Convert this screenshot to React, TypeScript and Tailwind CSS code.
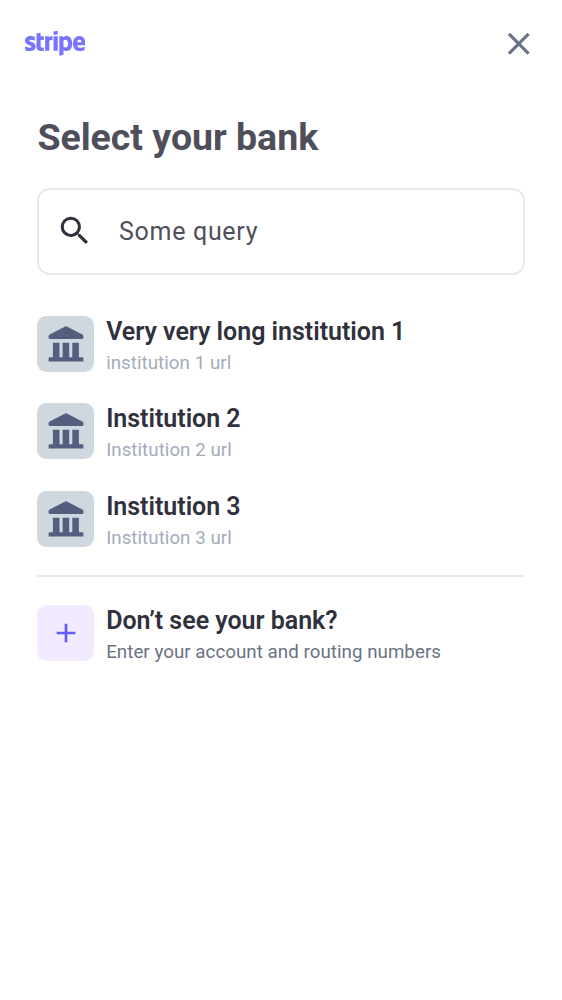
import React from "react";
import { FaStripe } from "react-icons/fa";
import { MdSearch, MdClose, MdAdd } from "react-icons/md";

function BankIcon() {
  return (
    <svg viewBox="0 0 36 36" className="ml-[0.6px] size-9 text-[#545f80]" fill="currentColor">
      <path d="M17.2 0.4 Q18 0 18.8 0.4 L34.4 8.4 Q35.4 9 35.4 10.2 V11.9 Q35.4 13 34.1 13 H1.9 Q0.6 13 0.6 11.9 V10.2 Q0.6 9 1.6 8.4 Z" />
      <path d="M4.9 16.7h6.6v14.5h3.1V16.7h6.6v14.5h3.1V16.7h6.6v14.5h3.3q1.2 0 1.2 1.2v3H.6v-3q0-1.2 1.2-1.2h3.1Z" />
    </svg>
  );
}

type RowProps = {
  title: string;
  caption: string;
  captionClass: string;
  tileClass: string;
  icon: React.ReactNode;
};

function Row({ title, caption, captionClass, tileClass, icon }: RowProps) {
  return (
    <button className="flex h-[56.25px] w-full items-start gap-[12.5px] text-left">
      <span className={`flex size-[56.25px] shrink-0 items-center justify-center rounded-[9.4px] ${tileClass}`}>
        {icon}
      </span>
      <span className="flex flex-col whitespace-nowrap">
        <span className="h-[31px] text-[25px] leading-[31px] font-semibold tracking-[-0.02px] text-[#30313d]">{title}</span>
        <span className={`mt-[1.1px] h-[31px] text-[18.75px] leading-[31px] tracking-[0.03px] ${captionClass}`}>{caption}</span>
      </span>
    </button>
  );
}

const institutions = [
  { name: "Very very long institution 1", url: "institution 1 url" },
  { name: "Institution 2", url: "Institution 2 url" },
  { name: "Institution 3", url: "Institution 3 url" },
];

export default function App() {
  return (
    <div className="min-h-[1000px] w-[562px] bg-white font-['Roboto',sans-serif]">
      <header className="flex h-[87px] items-center justify-between pr-[25px] pl-[24.5px]">
        <FaStripe className="mb-[0.6px] h-[48.4px] w-[60.5px] text-[#7a73ff]" />
        <button aria-label="Close">
          <MdClose className="size-[37.5px] text-[#6a7383]" />
        </button>
      </header>
      <main className="px-[37.4px] pt-[27.5px]">
        <h1 className="h-[44px] text-[37.5px] leading-[44px] font-bold tracking-[-0.02px] text-[#4f4f5b]">Select your bank</h1>
        <label className="-mx-[0.4px] mt-[29px] flex h-[87.5px] items-center rounded-[12.5px] border-2 border-[#e5e9f0] pl-[17px]">
          <MdSearch className="mb-px size-[37.5px] shrink-0 text-[#30313d]" />
          <input
            defaultValue="Some query"
            className="ml-[25.5px] w-[380px] bg-transparent text-[25px] leading-[37px] tracking-[0.7px] text-[#4f4f5b] outline-none"
          />
        </label>
        <div className="mt-[40.7px] flex flex-col gap-[31.25px]">
          {institutions.map((item) => (
            <Row
              key={item.name}
              title={item.name}
              caption={item.url}
              captionClass="text-[#a3acba]"
              tileClass="bg-[#cfd7df]"
              icon={<BankIcon />}
            />
          ))}
        </div>
        <div className="mt-[28.3px] h-[2px] bg-[#e5e9f0]" />
        <div className="mt-[27.8px]">
          <Row
            title="Don’t see your bank?"
            caption="Enter your account and routing numbers"
            captionClass="text-[#6a7383]"
            tileClass="bg-[#f2ebff]"
            icon={<MdAdd className="mb-px size-[32px] text-[#625afa]" />}
          />
        </div>
      </main>
    </div>
  );
}
